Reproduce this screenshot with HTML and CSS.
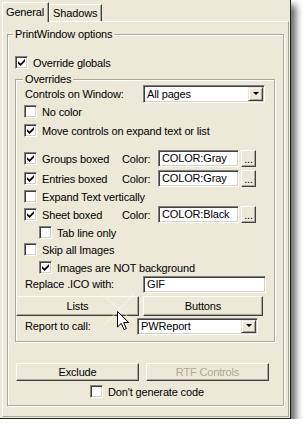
FILE: index.html
```html
<!DOCTYPE html>
<html lang="en">
<head>
    <meta charset="UTF-8">
    <title>PrintWindow options</title>
    <link rel="stylesheet" href="styles.css">
</head>
<body>

<div class="window">

    <!-- Tab strip -->
    <div class="tabs">
        <div class="tab active">General</div>
        <div class="tab">Shadows</div>
    </div>

    <div class="page">
        <div class="group main-group">
            <span class="legend">PrintWindow options</span>

            <div class="row check-row override-row">
                <span class="box"><svg viewBox="0 0 7 7"><path d="M0 2.2 L2.5 4.6 L7 0.1 V2.5 L2.5 7 L0 4.6 Z"/></svg></span>Override globals
            </div>

            <!-- Overrides -->
            <div class="group overrides">
                <span class="legend">Overrides</span>

                <div class="row field-row mt-5">
                    <span class="label">Controls on Window:</span>
                    <div class="combo wide"><span class="value">All pages</span><span class="drop"></span></div>
                </div>

                <div class="row check-row mt-2">
                    <span class="box"></span>No color
                </div>
                <div class="row check-row mt-6">
                    <span class="box"><svg viewBox="0 0 7 7"><path d="M0 2.2 L2.5 4.6 L7 0.1 V2.5 L2.5 7 L0 4.6 Z"/></svg></span>Move controls on expand text or list
                </div>

                <div class="row color-row mt-13">
                    <span class="check-label"><span class="box"><svg viewBox="0 0 7 7"><path d="M0 2.2 L2.5 4.6 L7 0.1 V2.5 L2.5 7 L0 4.6 Z"/></svg></span>Groups boxed</span>
                    <span class="color-label">Color:</span>
                    <span class="field color-field">COLOR:Gray</span>
                    <button class="btn dots">...</button>
                </div>
                <div class="row color-row mt-3">
                    <span class="check-label"><span class="box"><svg viewBox="0 0 7 7"><path d="M0 2.2 L2.5 4.6 L7 0.1 V2.5 L2.5 7 L0 4.6 Z"/></svg></span>Entries boxed</span>
                    <span class="color-label">Color:</span>
                    <span class="field color-field">COLOR:Gray</span>
                    <button class="btn dots">...</button>
                </div>
                <div class="row check-row mt-3">
                    <span class="box"></span>Expand Text vertically
                </div>
                <div class="row color-row mt-3">
                    <span class="check-label"><span class="box"><svg viewBox="0 0 7 7"><path d="M0 2.2 L2.5 4.6 L7 0.1 V2.5 L2.5 7 L0 4.6 Z"/></svg></span>Sheet boxed</span>
                    <span class="color-label">Color:</span>
                    <span class="field color-field">COLOR:Black</span>
                    <button class="btn dots">...</button>
                </div>
                <div class="row check-row sub mt-3">
                    <span class="box"></span>Tab line only
                </div>
                <div class="row check-row mt-4">
                    <span class="box"></span>Skip all Images
                </div>
                <div class="row check-row sub mt-5">
                    <span class="box"><svg viewBox="0 0 7 7"><path d="M0 2.2 L2.5 4.6 L7 0.1 V2.5 L2.5 7 L0 4.6 Z"/></svg></span>Images are NOT background
                </div>

                <div class="row field-row mt-1">
                    <span class="label">Replace .ICO with:</span>
                    <span class="field gif-field">GIF</span>
                </div>

                <div class="row button-row mt-3">
                    <button class="btn lists">Lists</button>
                    <button class="btn buttons">Buttons</button>
                </div>

                <div class="row field-row mt-1">
                    <span class="label short">Report to call:</span>
                    <div class="combo report"><span class="value">PWReport</span><span class="drop"></span></div>
                </div>
            </div>

            <div class="row bottom-buttons">
                <button class="btn">Exclude</button>
                <button class="btn" disabled>RTF Controls</button>
            </div>

            <div class="row check-row nogen">
                <span class="box"></span>Don't generate code
            </div>
        </div>
    </div>

    <!-- mouse pointer and click glint over the Lists button -->
    <svg class="glint" width="40" height="36" viewBox="0 0 40 36">
        <path d="M4 4 L36 32 M35 3 L6 33" stroke="#ffffff" stroke-width="1" opacity="0.75"/>
    </svg>
    <svg class="pointer" width="13" height="20" viewBox="0 0 13 20">
        <path d="M0.5 0.5 V16 L4.3 12.3 L7 18.6 L9.3 17.6 L6.7 11.5 H11.7 Z" fill="#fff" stroke="#000" stroke-width="1"/>
    </svg>
</div>

</body>
</html>
```

FILE: styles.css
```css
* {
    box-sizing: border-box;
}

body {
    margin: 0;
    background-color: #fff;
    font-family: "Liberation Sans", Arial, sans-serif;
    font-size: 11px;
    letter-spacing: -0.15px;
    color: #000;
}

.window {
    position: relative;
    width: 291px;
    height: 419px;
    padding: 2px 0 0 2px;
    background-color: #ece9d8;
    border-right: 1px solid #222;
    border-bottom: 1px solid #222;
    box-shadow: 5px 5px 7px rgba(0, 0, 0, 0.6);
}

/* Tabs */
.tabs {
    display: flex;
    align-items: flex-end;
    height: 19px;
    position: relative;
    z-index: 1;
}

.tab {
    height: 17px;
    padding: 2px 4px 0 3px;
    border: 1px solid;
    border-color: #fff #404040 transparent #fff;
    border-bottom: none;
    box-shadow: inset -1px 0 0 #aca899;
    line-height: 13px;
}

.tab.active {
    height: 20px;
    margin-bottom: -1px;
    padding: 3px 4px 0 3px;
    background-color: #ece9d8;
}

/* Tab page */
.page {
    width: 287px;
    height: 396px;
    padding: 12px 0 0 4px;
    border: 1px solid;
    border-color: #fff #aca899 #aca899 #fff;
}

/* Etched group boxes */
.group {
    position: relative;
    border: 1px solid #aca899;
    box-shadow: inset 1px 1px 0 #fff, 1px 1px 0 #fff;
}

.legend {
    position: absolute;
    top: -7px;
    left: 5px;
    padding: 0 2px;
    line-height: 13px;
    background-color: #ece9d8;
}

.main-group {
    width: 277px;
    height: 372px;
}

.overrides {
    width: 260px;
    height: 263px;
    margin: 10px 0 0 7px;
}

.overrides .legend {
    left: 7px;
}

/* Rows */
.row {
    display: flex;
    align-items: center;
    white-space: nowrap;
}

.check-row {
    height: 13px;
    padding-left: 8px;
}

.check-row.sub {
    padding-left: 23px;
}

.override-row {
    margin: 21px 0 0 7px;
    padding-left: 0;
}

.box {
    position: relative;
    flex: none;
    width: 13px;
    height: 13px;
    margin-right: 5px;
    border: 1px solid;
    border-color: #808080 #fff #fff #808080;
    box-shadow: inset 1px 1px 0 #404040, inset -1px -1px 0 #d4d0c8;
    background-color: #fff;
}

.box svg {
    position: absolute;
    left: 2px;
    top: 2px;
    width: 7px;
    height: 7px;
}

.mt-1 { margin-top: 1px; }
.mt-2 { margin-top: 2px; }
.mt-3 { margin-top: 3px; }
.mt-4 { margin-top: 4px; }
.mt-5 { margin-top: 5px; }
.mt-6 { margin-top: 6px; }
.mt-13 { margin-top: 13px; }

.field-row {
    height: 18px;
}

.label {
    width: 127px;
    padding-left: 9px;
}

.label.short {
    width: 121px;
}

/* Sunken edit fields */
.field,
.combo {
    position: relative;
    height: 17px;
    border: 1px solid;
    border-color: #808080 #fff #fff #808080;
    box-shadow: inset 1px 1px 0 #404040, inset -1px -1px 0 #d4d0c8;
    background-color: #fff;
    padding: 0 3px;
    line-height: 15px;
}

.combo.wide {
    width: 122px;
    height: 18px;
    line-height: 16px;
}

.combo.report {
    width: 121px;
}

.drop {
    position: absolute;
    right: 1px;
    top: 1px;
    bottom: 1px;
    width: 15px;
    background-color: #ece9d8;
    border: 1px solid;
    border-color: #ece9d8 #404040 #404040 #ece9d8;
    box-shadow: inset 1px 1px 0 #fff, inset -1px -1px 0 #aca899;
}

.drop::after {
    content: "";
    position: absolute;
    left: 4px;
    top: 50%;
    margin-top: -2px;
    border-top: 3px solid #000;
    border-left: 3px solid transparent;
    border-right: 3px solid transparent;
}

.color-row {
    height: 17px;
}

.check-label {
    display: flex;
    align-items: center;
    width: 106px;
    padding-left: 8px;
}

.color-label {
    width: 36px;
}

.color-field {
    width: 81px;
    margin-right: 2px;
}

.gif-field {
    width: 123px;
}

/* Raised push buttons */
.btn {
    height: 17px;
    padding: 0;
    font: inherit;
    letter-spacing: inherit;
    color: #000;
    background-color: #ece9d8;
    border: 1px solid;
    border-color: #fff #404040 #404040 #fff;
    box-shadow: inset -1px -1px 0 #aca899;
}

.btn:disabled {
    color: #aca899;
}

.dots {
    width: 15px;
    line-height: 10px;
}

.button-row {
    height: 20px;
}

.button-row .btn {
    height: 20px;
}

.lists {
    width: 123px;
    margin-right: 4px;
}

.buttons {
    width: 120px;
}

.bottom-buttons {
    margin: 21px 0 0 8px;
    gap: 7px;
}

.bottom-buttons .btn {
    width: 123px;
    height: 18px;
}

.nogen {
    margin-top: 4px;
    padding-left: 82px;
}

/* Pointer overlay */
.glint {
    position: absolute;
    left: 99px;
    top: 291px;
}

.pointer {
    position: absolute;
    left: 117px;
    top: 311px;
}
```
